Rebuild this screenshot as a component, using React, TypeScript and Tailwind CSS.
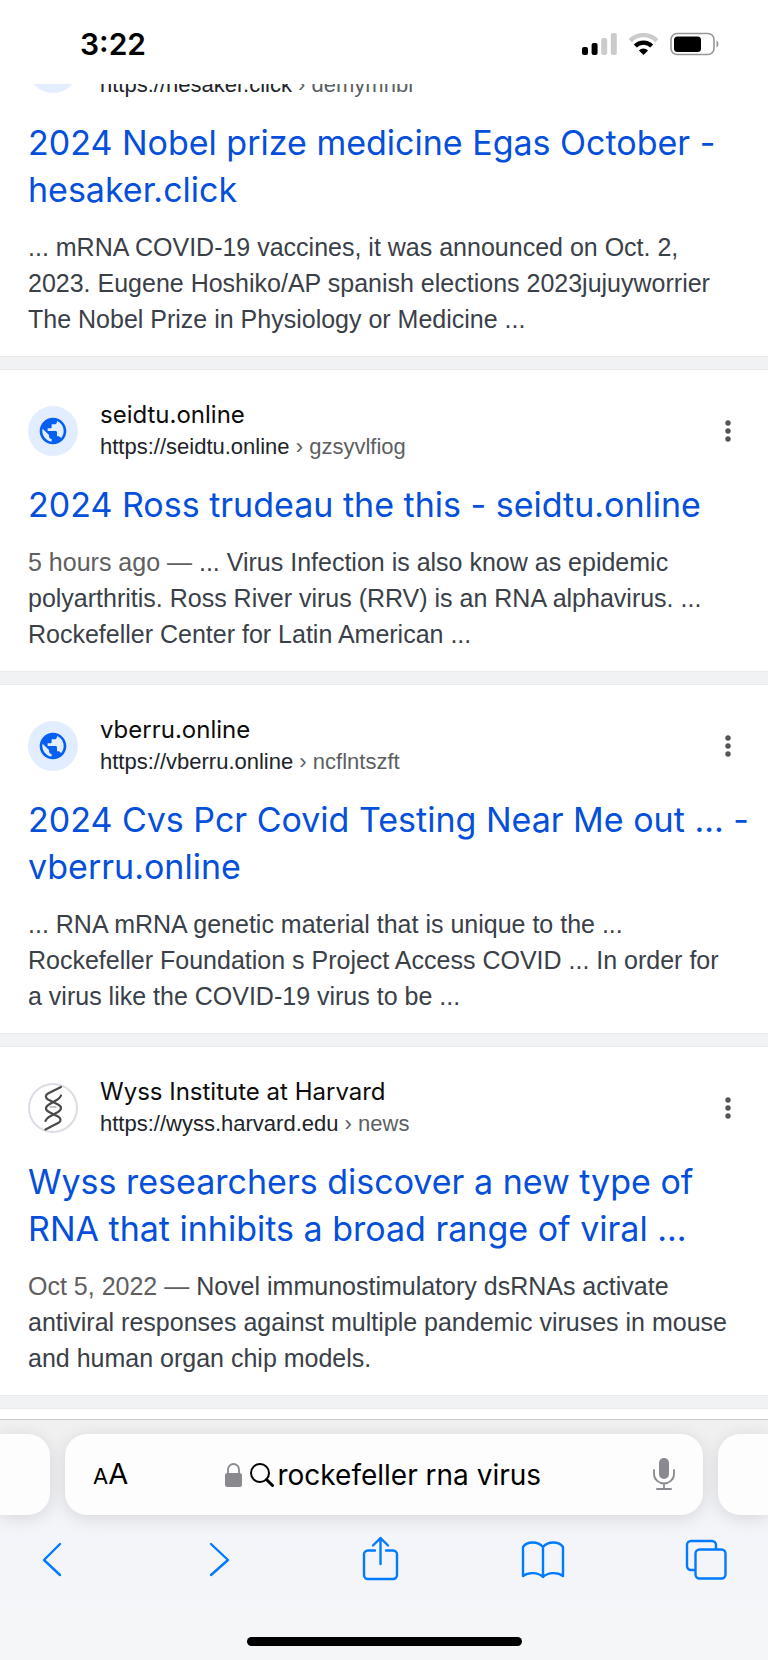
import React from "react";

interface Result {
  site?: string;
  url: string;
  path: string;
  icon: "globe" | "helix";
  title: string[];
  date?: string;
  snippet: string[];
}

const results: Result[] = [
  {
    url: "https://hesaker.click",
    path: "demymnbi",
    icon: "globe",
    title: ["2024 Nobel prize medicine Egas October -", "hesaker.click"],
    snippet: [
      "... mRNA COVID-19 vaccines, it was announced on Oct. 2,",
      "2023. Eugene Hoshiko/AP spanish elections 2023jujuyworrier",
      "The Nobel Prize in Physiology or Medicine ...",
    ],
  },
  {
    site: "seidtu.online",
    url: "https://seidtu.online",
    path: "gzsyvlfiog",
    icon: "globe",
    title: ["2024 Ross trudeau the this - seidtu.online"],
    date: "5 hours ago",
    snippet: [
      "... Virus Infection is also know as epidemic",
      "polyarthritis. Ross River virus (RRV) is an RNA alphavirus. ...",
      "Rockefeller Center for Latin American ...",
    ],
  },
  {
    site: "vberru.online",
    url: "https://vberru.online",
    path: "ncflntszft",
    icon: "globe",
    title: ["2024 Cvs Pcr Covid Testing Near Me out ... -", "vberru.online"],
    snippet: [
      "... RNA mRNA genetic material that is unique to the ...",
      "Rockefeller Foundation s Project Access COVID ... In order for",
      "a virus like the COVID-19 virus to be ...",
    ],
  },
  {
    site: "Wyss Institute at Harvard",
    url: "https://wyss.harvard.edu",
    path: "news",
    icon: "helix",
    title: [
      "Wyss researchers discover a new type of",
      "RNA that inhibits a broad range of viral ...",
    ],
    date: "Oct 5, 2022",
    snippet: [
      "Novel immunostimulatory dsRNAs activate",
      "antiviral responses against multiple pandemic viruses in mouse",
      "and human organ chip models.",
    ],
  },
];

const StatusBar: React.FC = () => (
  <header className="flex h-[84px] items-center justify-between bg-white pt-1 pr-12 pl-20">
    <time className="text-[30px] leading-8 font-semibold text-black">3:22</time>
    <div className="flex items-center gap-[11px]">
      <svg width="35" height="22" viewBox="0 0 35 22" aria-label="Signal">
        <rect x="0" y="14" width="6" height="8" rx="2" fill="#000" />
        <rect x="9.6" y="10" width="6" height="12" rx="2" fill="#000" />
        <rect x="19.2" y="5" width="6" height="17" rx="2" fill="#cbcbcb" />
        <rect x="28.8" y="0" width="6" height="22" rx="2" fill="#cbcbcb" />
      </svg>
      <svg width="31" height="22" viewBox="0 0 31 22" fill="none" aria-label="Wi-Fi">
        <path d="M2.2 7.6a19 19 0 0 1 26.6 0" stroke="#cbcbcb" strokeWidth="4.4" />
        <path d="M7.3 13a11.8 11.8 0 0 1 16.4 0" stroke="#000" strokeWidth="4.2" />
        <path d="M15.5 22l-4.6-4.6a6.5 6.5 0 0 1 9.2 0z" fill="#000" />
      </svg>
      <svg width="50" height="24" viewBox="0 0 50 24" aria-label="Battery">
        <rect x="1" y="1.5" width="43" height="21" rx="6" fill="none" stroke="#969696" strokeWidth="1.6" />
        <rect x="4" y="4.5" width="27" height="15.5" rx="3.5" fill="#000" />
        <path d="M46.5 8.500c2.6 1 2.6 6 0 7z" fill="#969696" />
      </svg>
    </div>
  </header>
);

const SiteIcon: React.FC<{ icon: Result["icon"] }> = ({ icon }) => {
  if (icon === "helix") {
    return (
      <span className="size-[50px] shrink-0 rounded-full border-2 border-[#dcdde5]">
        <svg className="size-[46px]" viewBox="2 2 46 46" fill="none" stroke="#4a4a4a" strokeWidth="2.2" strokeLinecap="round">
          <path d="M33 4L20 10.5c-3 1.6-2.6 4.6 0 6L30 21.5c4 2 4 5 0 7.5l-9 5c-2 1.2-3 2.5-3.5 4" />
          <path d="M33 12.5c-.5 1.5-1.500 2.7-3.500 4L21 21.5c-4 2.5-4 5.5 0 7.5l9 4.5c3 1.5 3.5 4.5.5 6.2L17.500 46.5" />
          <path d="M22 24h6" stroke="#8a8a8a" strokeWidth="1" />
        </svg>
      </span>
    );
  }
  return (
    <span className="flex size-[50px] shrink-0 items-center justify-center rounded-full bg-[#e2edff]">
      <svg className="size-8" viewBox="0 0 24 24" fill="#0560f2">
        <path d="M12 2C6.48 2 2 6.48 2 12s4.48 10 10 10 10-4.48 10-10S17.52 2 12 2zM4 12c0-.61.08-1.21.21-1.78L8.99 15v1c0 1.1.9 2 2 2v1.93C7.06 19.43 4 16.07 4 12zm13.89 5.4c-.26-.81-1-1.4-1.9-1.4h-1v-3c0-.55-.45-1-1-1h-6v-2h2c.55 0 1-.45 1-1V7h2c1.1 0 2-.9 2-2v-.41C17.92 5.77 20 8.65 20 12c0 2.08-.81 3.98-2.11 5.4z" />
      </svg>
    </span>
  );
};

const Url: React.FC<{ url: string; path: string }> = ({ url, path }) => (
  <p className="font-['Liberation_Sans',sans-serif] text-[22px] leading-8 text-[#202428]">
    {url} <span className="text-[#5c5f62]">› {path}</span>
  </p>
);

const ResultCard: React.FC<{ result: Result }> = ({ result }) => (
  <article className="bg-white">
    <div className="px-7 pb-[19px]">
      {result.site ? (
        <div className="flex items-center pt-[29px]">
          <SiteIcon icon={result.icon} />
          <div className="ml-[22px] flex-1">
            <p className="text-2xl leading-8 text-[#0c0c0c]">{result.site}</p>
            <Url url={result.url} path={result.path} />
          </div>
          <button type="button" aria-label="About this result" className="flex h-8 w-6 items-center justify-center">
            <svg width="6" height="22" viewBox="0 0 6 22" fill="#555">
              <circle cx="3" cy="3" r="2.7" />
              <circle cx="3" cy="11" r="2.7" />
              <circle cx="3" cy="19" r="2.7" />
            </svg>
          </button>
        </div>
      ) : (
        /* scrolled under the status bar, only the lower edge is left */
        <div className="flex h-[17px] items-end overflow-hidden">
          <span className="mb-2 size-[50px] shrink-0 rounded-full bg-[#e2edff]" />
          <div className="ml-[22px]">
            <Url url={result.url} path={result.path} />
          </div>
        </div>
      )}
      <h3 className="mt-[18px] text-[34px] leading-[47px] whitespace-nowrap">
        <a href="#" className="text-[#054fdb]">
          {result.title.map((line) => (
            <span key={line} className="block">
              {line}
            </span>
          ))}
        </a>
      </h3>
      <p className="mt-4 font-['Liberation_Sans',sans-serif] text-[25px] leading-9 whitespace-nowrap text-[#3a4048]">
        {result.snippet.map((line, i) => (
          <span key={line} className="block">
            {i === 0 && result.date && (
              <span className="text-[#606060]">{result.date} — </span>
            )}
            {line}
          </span>
        ))}
      </p>
    </div>
    <div className="h-3.5 border-y border-[#e7e9eb] bg-[#f0f2f4]" />
  </article>
);

const AddressBar: React.FC = () => (
  <div className="flex h-[81px] gap-[15px]">
    <div className="w-[50px] rounded-r-[22px] bg-[#fdfdfd] shadow-[0_3px_18px_rgba(0,0,0,0.12)]" />
    <form
      onSubmit={(e) => e.preventDefault()}
      className="flex flex-1 items-center justify-between rounded-[22px] bg-[#fdfdfd] px-7 shadow-[0_3px_18px_rgba(0,0,0,0.12)]"
    >
      <button type="button" aria-label="Page settings" className="flex w-9 items-baseline text-black">
        <span className="text-[22px] leading-8">A</span>
        <span className="text-[29px] leading-8">A</span>
      </button>
      <label className="flex items-center">
        <svg width="17" height="24" viewBox="0 0 17 24" fill="none">
          <path d="M3 11V6.5a5.5 5.5 0 0 1 11 0V11" stroke="#8a8990" strokeWidth="1.8" />
          <rect x="0" y="10" width="17" height="14" rx="2.5" fill="#8a8990" />
        </svg>
        <svg className="ml-2" width="24" height="24" viewBox="0 0 24 24" fill="none" stroke="#000" strokeLinecap="round">
          <circle cx="10" cy="10" r="9" strokeWidth="2" />
          <path d="M16.5 16.5l6 6" strokeWidth="3" />
        </svg>
        <input
          type="text"
          aria-label="Address"
          defaultValue="rockefeller rna virus"
          className="ml-1 w-[266px] bg-transparent text-[28px] leading-9 text-black outline-none"
        />
      </label>
      <button type="button" aria-label="Dictate" className="flex w-9 justify-end">
        <svg width="22" height="33" viewBox="0 0 22 33" fill="none" stroke="#8a8990" strokeWidth="1.8" strokeLinecap="round">
          <rect x="6" y="0" width="10" height="21" rx="5" fill="#8a8990" stroke="none" />
          <path d="M1 12v4a10 9.5 0 0 0 20 0v-4M11 25.5v5.5M4 31h14" />
        </svg>
      </button>
    </form>
    <div className="w-[50px] rounded-l-[22px] bg-[#fdfdfd] shadow-[0_3px_18px_rgba(0,0,0,0.12)]" />
  </div>
);

const tools = [
  { name: "Back", d: "M29 6L13 22l16 15" },
  { name: "Forward", d: "M16 6l17 16-17 15" },
  {
    name: "Share",
    d: "M16 12.500H9a4 4 0 0 0-4 4v20.500a4 4 0 0 0 4 4h25a4 4 0 0 0 4-4V16.500a4 4 0 0 0-4-4h-7M21.500 26V0M14 7.500l7.500-7.500L29 7.500",
  },
  {
    name: "Bookmarks",
    d: "M21 9C16 3 5 3 1 9v29c5-4 15-4 20 1 5-5 15-5 20-1V9C37 3 26 3 21 9zM21 9v30",
  },
  {
    name: "Tabs",
    d: "M9.500 32H5a4 4 0 0 1-4-4V7a4 4 0 0 1 4-4h21a4 4 0 0 1 4 4v4.500M13.500 11.500h22a4 4 0 0 1 4 4v21a4 4 0 0 1-4 4h-22a4 4 0 0 1-4-4v-21a4 4 0 0 1 4-4z",
  },
];

const Toolbar: React.FC = () => (
  <nav className="mt-[19px] flex h-[50px] items-center justify-between pr-10 pl-[31px]">
    {tools.map((tool) => (
      <button key={tool.name} type="button" aria-label={tool.name}>
        <svg
          className="overflow-visible"
          width="42"
          height="42"
          viewBox="0 0 42 42"
          fill="none"
          stroke="#007aff"
          strokeWidth="2.4"
          strokeLinecap="round"
          strokeLinejoin="round"
        >
          <path d={tool.d} />
        </svg>
      </button>
    ))}
  </nav>
);

export default function App() {
  return (
    <div className="w-full overflow-hidden bg-white font-['Inter',sans-serif]">
      <StatusBar />
      <main>
        {results.map((result) => (
          <ResultCard key={result.url} result={result} />
        ))}
        <div className="h-2.5 bg-white" />
      </main>
      <footer className="border-t border-[#c9cacc] bg-linear-to-b from-[#f0f0f0] via-[#f4f5fa] to-[#f5f6f7] pt-3.5 pb-3.5">
        <AddressBar />
        <Toolbar />
        <div className="mx-auto mt-[53px] h-[9px] w-[275px] rounded-full bg-black" />
      </footer>
    </div>
  );
}
